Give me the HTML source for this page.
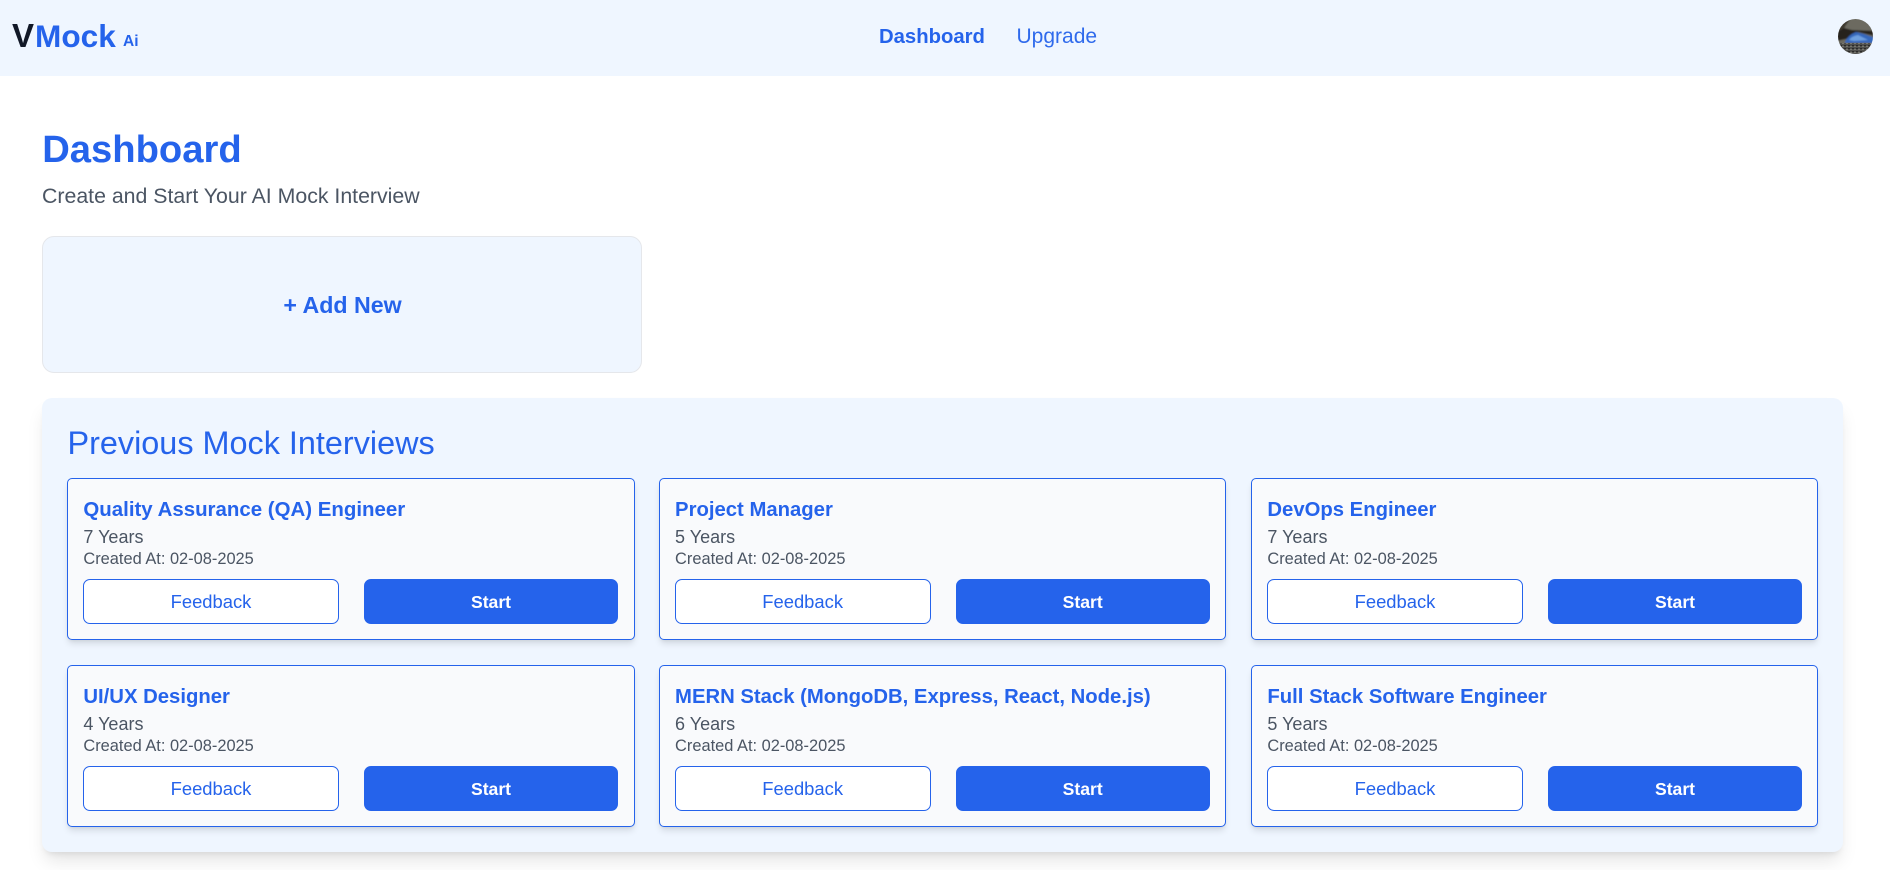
<!DOCTYPE html>
<html lang="en">
<head>
<meta charset="utf-8">
<title>VMock Ai</title>
<style>
*{box-sizing:border-box;margin:0;padding:0}
html,body{width:1890px;height:870px;overflow:hidden;background:#fff;font-family:"Liberation Sans",Arial,sans-serif}
.t{position:absolute;white-space:nowrap;line-height:40px}
header{position:absolute;left:0;top:0;width:1890px;height:76px;background:#eff6ff}
.blue{color:#2563eb}
.add{position:absolute;left:42px;top:236px;width:600px;height:137px;background:#eff6ff;border:1px solid #e5e7eb;border-radius:12px}
.panel{position:absolute;left:42px;top:398px;width:1801px;height:454px;background:#eff6ff;border-radius:10px;box-shadow:0 12px 18px -3px rgba(0,0,0,.1),0 5px 7px -4px rgba(0,0,0,.1)}
.card{position:absolute;width:567.67px;height:162px;background:#f9fafc;border:1px solid #2563eb;border-radius:5px;box-shadow:0 5px 7px -1px rgba(0,0,0,.1),0 2px 4px -2px rgba(0,0,0,.1)}
.card div{position:absolute;white-space:nowrap;line-height:24px}
.card .ti{left:15.4px;top:19px;font-size:20.3px;font-weight:700;color:#2563eb}
.card .yr{left:15.4px;top:46px;font-size:18px;color:#4b5563}
.card .cr{left:15.4px;top:68px;font-size:16.4px;color:#4b5563}
.card .b{top:100px;height:45px;line-height:43px;text-align:center;border-radius:7px;border:1px solid #2563eb}
.card .f{left:15px;width:256px;background:#fff;color:#2563eb;font-size:18.4px}
.card .s{left:296px;width:254px;background:#2563eb;color:#fff;font-size:17.6px;font-weight:700;line-height:44px}
</style>
</head>
<body>
<header>
  <div class="t" style="left:12px;top:16px;font-size:33px;font-weight:700;color:#111827">V</div>
  <div class="t blue" style="left:35px;top:16px;font-size:31.6px;font-weight:700">Mock</div>
  <div class="t blue" style="left:123px;top:22px;font-size:15.5px;font-weight:700">Ai</div>
  <div class="t blue" style="left:879px;top:17px;font-size:20.3px;font-weight:700">Dashboard</div>
  <div class="t blue" style="left:1016.5px;top:17px;font-size:21px;opacity:.95">Upgrade</div>
  <svg style="position:absolute;left:1838px;top:19px" width="35" height="35" viewBox="0 0 35 35">
    <defs>
      <clipPath id="c"><circle cx="17.5" cy="17.5" r="17.5"/></clipPath>
      <filter id="bl" x="-10%" y="-10%" width="120%" height="120%"><feGaussianBlur stdDeviation="0.8"/></filter>
      <pattern id="n" width="4" height="3" patternUnits="userSpaceOnUse"><rect width="4" height="3" fill="#4f4f4c"/><rect x="0" y="0" width="2" height="1" fill="#77776f"/><rect x="2" y="2" width="2" height="1" fill="#2a2a28"/></pattern>
    </defs>
    <g clip-path="url(#c)">
      <g filter="url(#bl)">
        <rect x="-2" y="-2" width="39" height="39" fill="#6c6a60"/>
        <path d="M-2 -2 H14 L8 6 L4 13 -2 16Z" fill="#3c392f"/>
        <path d="M-2 14 L6 9 L14 11 L37 12 V17 L20 13 L8 20 -2 22Z" fill="#26241f"/>
        <path d="M7 23 Q10 16 18 13 L26 15 L37 19 V24 H7Z" fill="#3468bc"/>
        <path d="M11 21 Q14 17 20 16 L30 21 16 22Z" fill="#6ea0e0"/>
      </g>
      <rect y="24" width="35" height="11" fill="url(#n)"/>
    </g>
  </svg>
</header>

<div class="t blue" style="left:42.2px;top:130px;font-size:38.2px;font-weight:700">Dashboard</div>
<div class="t" style="left:42px;top:176px;font-size:21.3px;color:#4b5563">Create and Start Your AI Mock Interview</div>

<div class="add"></div>
<div class="t blue" style="left:42px;width:601px;text-align:center;top:285px;font-size:23.2px;font-weight:700">+ Add New</div>

<div class="panel"></div>
<div class="t blue" style="left:67.5px;top:423px;font-size:32.4px">Previous Mock Interviews</div>

<div class="card" style="left:67px;top:478px"><div class="ti" style="font-size:20.45px">Quality Assurance (QA) Engineer</div><div class="yr">7 Years</div><div class="cr">Created At: 02-08-2025</div><div class="b f">Feedback</div><div class="b s">Start</div></div>
<div class="card" style="left:658.67px;top:478px"><div class="ti">Project Manager</div><div class="yr">5 Years</div><div class="cr">Created At: 02-08-2025</div><div class="b f">Feedback</div><div class="b s">Start</div></div>
<div class="card" style="left:1251px;top:478px;width:567px"><div class="ti">DevOps Engineer</div><div class="yr">7 Years</div><div class="cr">Created At: 02-08-2025</div><div class="b f">Feedback</div><div class="b s">Start</div></div>
<div class="card" style="left:67px;top:665px"><div class="ti">UI/UX Designer</div><div class="yr">4 Years</div><div class="cr">Created At: 02-08-2025</div><div class="b f">Feedback</div><div class="b s">Start</div></div>
<div class="card" style="left:658.67px;top:665px"><div class="ti">MERN Stack (MongoDB, Express, React, Node.js)</div><div class="yr">6 Years</div><div class="cr">Created At: 02-08-2025</div><div class="b f">Feedback</div><div class="b s">Start</div></div>
<div class="card" style="left:1251px;top:665px;width:567px"><div class="ti">Full Stack Software Engineer</div><div class="yr">5 Years</div><div class="cr">Created At: 02-08-2025</div><div class="b f">Feedback</div><div class="b s">Start</div></div>
</body>
</html>
